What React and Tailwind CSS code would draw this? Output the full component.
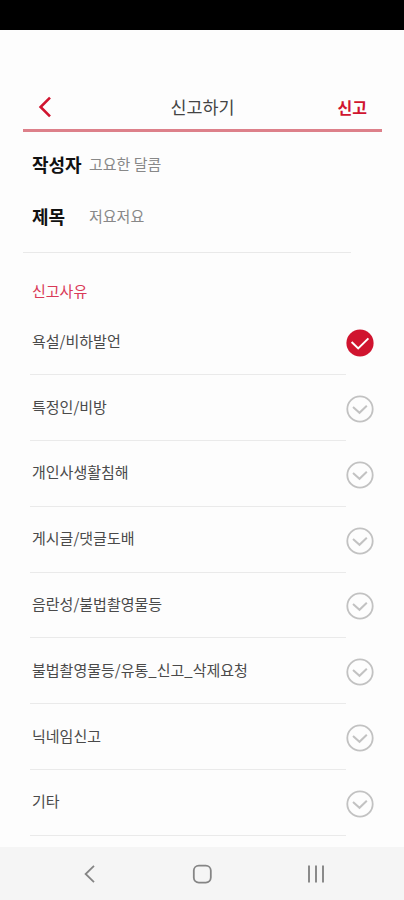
import React, { useState } from 'react';

const reasons = [
  '욕설/비하발언',
  '특정인/비방',
  '개인사생활침해',
  '게시글/댓글도배',
  '음란성/불법촬영물등',
  '불법촬영물등/유통_신고_삭제요청',
  '닉네임신고',
  '기타',
];

function CheckMark({ checked }) {
  if (checked) {
    return (
      <svg width="28" height="28" viewBox="0 0 28 28" fill="none">
        <circle cx="14" cy="14" r="13.6" fill="#d0142f" />
        <path d="M5.6 13L12.2 19.4L22.4 9.4" stroke="#fff" strokeWidth="2" />
      </svg>
    );
  }
  return (
    <svg width="28" height="28" viewBox="0 0 28 28" fill="none">
      <circle cx="14" cy="14" r="12.7" stroke="#c2c2c2" strokeWidth="1.8" />
      <path d="M7 12L13.5 17.8L20.8 10.8" stroke="#c2c2c2" strokeWidth="2" />
    </svg>
  );
}

function InfoRow({ label, value }) {
  return (
    <div className="flex h-[52px] items-center">
      <span className="w-[57px] text-lg leading-6 font-bold text-[#111]">{label}</span>
      <span className="text-[15px] leading-6 text-[#888]">{value}</span>
    </div>
  );
}

export default function App() {
  const [selected, setSelected] = useState(0);

  return (
    <div className="flex h-[900px] w-[404px] flex-col overflow-hidden bg-[#fdfdfd] font-['Noto_Sans_CJK_KR',sans-serif] whitespace-nowrap">
      {/* Status bar */}
      <div className="h-[30px] shrink-0 bg-black" />

      {/* Header */}
      <header className="mx-[23px] mr-[22px] mt-[55px] grid h-[47px] shrink-0 grid-cols-3 items-center border-b-[3px] border-[#dd808a] pr-[15px] pl-[15px]">
        <button type="button" className="justify-self-start">
          <svg width="14" height="22" viewBox="0 0 14 22" fill="none">
            <path d="M12 1.6L2.6 11L12 20.4" stroke="#d0142f" strokeWidth="2.6" />
          </svg>
        </button>
        <h1 className="justify-self-center text-[17.4px] leading-6 text-[#444]">신고하기</h1>
        <button type="button" className="justify-self-end text-base leading-6 font-bold text-[#d0142f]">신고</button>
      </header>

      {/* Post info */}
      <section className="ml-[23px] mr-[53px] h-[121px] shrink-0 border-b border-[#e9e9e9] pt-[6px] pl-[9px]">
        <InfoRow label="작성자" value="고요한 달콤" />
        <InfoRow label="제목" value="저요저요" />
      </section>

      {/* Reasons */}
      <section className="flex-1 pt-[26px]">
        <h2 className="ml-8 h-[30.4px] text-[15px] leading-6 text-[#d93a58]">신고사유</h2>
        <ul>
          {reasons.map((reason, i) => (
            <li key={reason} className="h-[65.8px]">
              <button type="button" onClick={() => setSelected(i)} className="flex h-full w-full pl-[30px] pr-[30px]">
                <span className="flex h-full w-[316px] items-center border-b border-[#eaeaea] pb-[2px] pl-[2px] text-[15px] leading-6 text-[#4a4a4a]">{reason}</span>
                <span className="flex h-full items-center pt-[2px]">
                  <CheckMark checked={i === selected} />
                </span>
              </button>
            </li>
          ))}
        </ul>
      </section>

      {/* Navigation bar */}
      <nav className="flex h-[53px] shrink-0 items-center justify-between bg-[#f5f5f5] pr-[79px] pl-[84px]">
        <svg width="12" height="20" viewBox="0 0 12 20" fill="none">
          <path d="M10 1.8L1.6 10L10 18.2" stroke="#858585" strokeWidth="1.8" />
        </svg>
        <svg width="20" height="20" viewBox="0 0 20 20" fill="none">
          <rect x="1.8" y="1.6" width="17" height="17" rx="5" stroke="#858585" strokeWidth="1.8" />
        </svg>
        <svg width="18" height="20" viewBox="0 0 18 20" fill="none">
          <path d="M2 1.6V18.6M9 1.6V18.6M16 1.6V18.6" stroke="#858585" strokeWidth="1.9" />
        </svg>
      </nav>
    </div>
  );
}
